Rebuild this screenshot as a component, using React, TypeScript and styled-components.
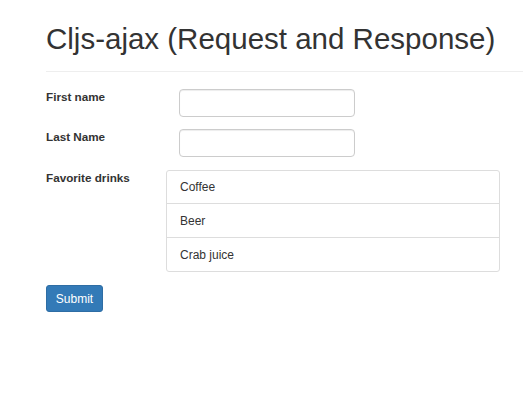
import React from "react";
import styled, { createGlobalStyle } from "styled-components";

const Global = createGlobalStyle`
  html, body { margin: 0; padding: 0; background: #fff; }
  body { font-family: "Liberation Sans", Arial, sans-serif; color: #333; font-size: 12px; }
  * { box-sizing: border-box; }
`;

const Page = styled.div`
  padding: 0 0 0 46px;
`;

const Title = styled.h1`
  margin: 0;
  padding-top: 22px;
  font-size: 29.5px;
  font-weight: 400;
  line-height: 34px;
  color: #333;
  letter-spacing: 0;
`;

const Rule = styled.hr`
  margin: 15px 0 0 0;
  border: 0;
  border-top: 1px solid #eee;
`;

const Form = styled.form`
  display: flex;
  flex-direction: column;
  padding-top: 17px;
`;

const FieldRow = styled.div<{ $gap: number }>`
  display: grid;
  grid-template-columns: 120px 1fr;
  align-items: start;
  margin-bottom: ${(p) => p.$gap}px;
`;

const Label = styled.label`
  font-weight: 700;
  font-size: 11.7px;
  line-height: 14px;
  padding-top: 1px;
`;

const Control = styled.div<{ $indent: number }>`
  padding-left: ${(p) => p.$indent}px;
`;

const TextInput = styled.input`
  display: block;
  width: 176px;
  height: 28px;
  border: 1px solid #ccc;
  border-radius: 4px;
  box-shadow: inset 0 1px 1px rgba(0, 0, 0, 0.075);
  padding: 4px 10px;
  font: inherit;
`;

const ListGroup = styled.ul`
  list-style: none;
  margin: 0;
  padding: 0;
  width: 334px;
  border: 1px solid #ddd;
  border-radius: 3px;
`;

const ListItem = styled.li`
  height: 34px;
  padding: 0 13px;
  display: flex;
  align-items: center;
  font-size: 12px;
  color: #333;
  border-top: 1px solid #ddd;
  &:first-child {
    border-top: 0;
    height: 32px;
  }
`;

const SubmitButton = styled.button`
  width: 57px;
  height: 27px;
  background: #337ab7;
  border: 1px solid #2e6da4;
  border-radius: 3px;
  color: #fff;
  font-family: "Liberation Sans", Arial, sans-serif;
  font-size: 12px;
  padding: 0;
`;

export default function App() {
  return (
    <>
      <Global />
      <Page>
        <Title>Cljs-ajax (Request and Response)</Title>
        <Rule />
        <Form onSubmit={(e) => e.preventDefault()}>
          <FieldRow $gap={12}>
            <Label>First name</Label>
            <Control $indent={13}>
              <TextInput type="text" />
            </Control>
          </FieldRow>
          <FieldRow $gap={13}>
            <Label>Last Name</Label>
            <Control $indent={13}>
              <TextInput type="text" />
            </Control>
          </FieldRow>
          <FieldRow $gap={13}>
            <Label>Favorite drinks</Label>
            <Control $indent={0}>
              <ListGroup>
                <ListItem>Coffee</ListItem>
                <ListItem>Beer</ListItem>
                <ListItem>Crab juice</ListItem>
              </ListGroup>
            </Control>
          </FieldRow>
          <div>
            <SubmitButton type="submit">Submit</SubmitButton>
          </div>
        </Form>
      </Page>
    </>
  );
}
